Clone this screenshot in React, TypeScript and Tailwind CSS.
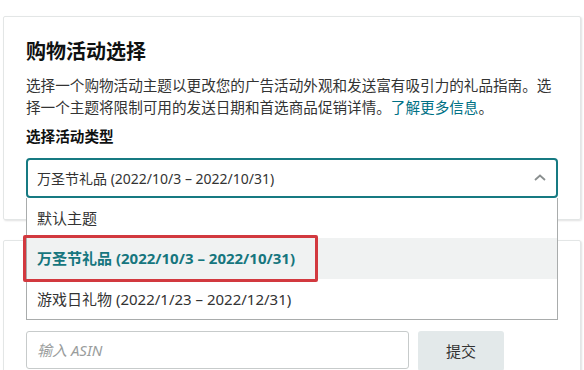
import React from 'react';

const options = [
  { label: '默认主题' },
  { label: '万圣节礼品 (2022/10/3 – 2022/10/31)', active: true },
  { label: '游戏日礼物 (2022/1/23 – 2022/12/31)' },
];

export default function App() {
  return (
    <div
      className="relative w-[584px] h-[370px] overflow-hidden bg-white text-[#0f1111]"
      style={{ fontFamily: '"Noto Sans", "Noto Sans CJK SC", sans-serif' }}
    >
      <div className="px-[3px] pt-4">
        {/* Campaign theme card */}
        <div className="h-[204px] rounded-[2px] border border-[#e3e6e6] shadow-[1px_1px_2px_rgba(0,0,0,0.12)] px-[22px] pt-[21px]">
          <h2 className="text-[20px] leading-[28px] font-bold">购物活动选择</h2>
          <p className="mt-2 text-[14.6px] leading-[22px] text-[#333]">
            选择一个购物活动主题以更改您的广告活动外观和发送富有吸引力的礼品指南。选择一个主题将限制可用的发送日期和首选商品促销详情。<span className="text-[#007185]">了解更多信息</span>。
          </p>
          <div className="mt-[7px] text-[14.6px] leading-[22px] font-bold">选择活动类型</div>

          <div className="relative mt-[11px]">
            <div className="flex h-10 items-center justify-between rounded-[4px] border-2 border-[#167a82] pl-[9px] pr-[8px] text-[14px] text-[#333]">
              <span>万圣节礼品 (2022/10/3 – 2022/10/31)</span>
              <svg width="14" height="10" viewBox="0 0 14 10" className="mr-[1px]">
                <polyline points="2,7 7,2.5 12,7" fill="none" stroke="#8a8f8f" strokeWidth="1.8" />
              </svg>
            </div>

            {/* Open dropdown list */}
            <div className="absolute left-0 right-0 top-10 z-10 border border-[#a9acac] border-t-0 bg-white">
              {options.map((o) => (
                <div
                  key={o.label}
                  className={
                    o.active
                      ? 'relative flex h-[41px] items-center bg-[#f0f2f2] pl-[10px] text-[15px] font-bold text-[#16767e]'
                      : 'flex h-10 items-center pl-[10px] text-[15px] text-[#333]'
                  }
                >
                  {o.label}
                  {o.active && (
                    <div className="absolute left-[-4px] top-[-3px] h-[47px] w-[295px] rounded-[2px] border-[3px] border-[#d2393f]" />
                  )}
                </div>
              ))}
            </div>
          </div>
        </div>

        {/* ASIN card */}
        <div className="mt-[20px] h-[140px] rounded-[2px] border border-[#e3e6e6] shadow-[1px_1px_2px_rgba(0,0,0,0.12)] px-[22px] pt-[90px]">
          <div className="flex gap-[9px]">
            <input
              placeholder="输入 ASIN"
              className="h-[38px] w-[383px] rounded-[3px] border border-[#c7cbcb] px-[10px] text-[15px] italic placeholder:text-[#9a9d9d] outline-none"
            />
            <button className="h-10 w-[86px] rounded-[3px] bg-[#e3e9ea] text-[15px] text-[#333]">提交</button>
          </div>
        </div>
      </div>
    </div>
  );
}
